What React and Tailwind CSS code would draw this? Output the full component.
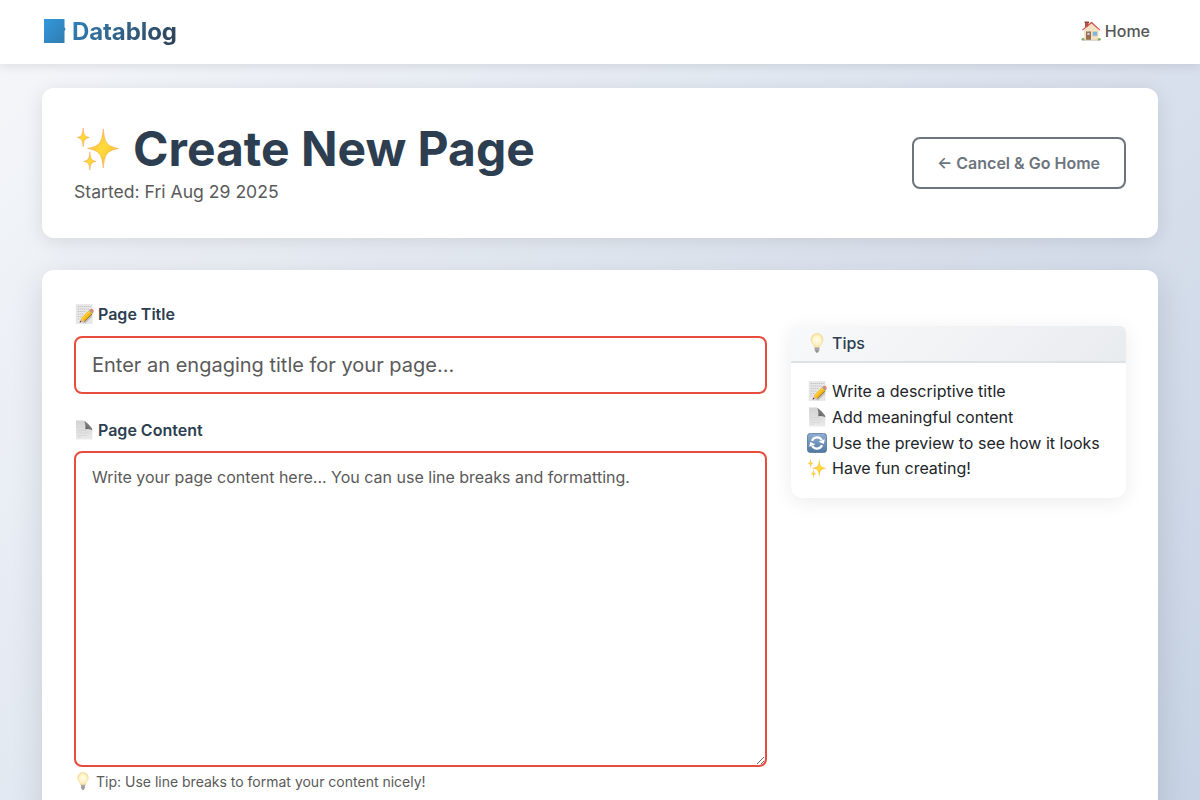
function Defs() {
  return (
    <svg className="absolute h-0 w-0" aria-hidden="true">
      <defs>
        <linearGradient id="gold" x1="0" y1="0" x2="1" y2="1">
          <stop offset="0" stopColor="#fbb040" />
          <stop offset=".5" stopColor="#ffdb3d" />
          <stop offset="1" stopColor="#f6a823" />
        </linearGradient>
        <linearGradient id="sheet" x1="0" y1="0" x2="0" y2="1">
          <stop offset="0" stopColor="#d2d2d2" />
          <stop offset="1" stopColor="#ebebeb" />
        </linearGradient>
        <linearGradient id="fold" x1="0" y1="1" x2="1" y2="0">
          <stop offset="0" stopColor="#4d4d4d" />
          <stop offset="1" stopColor="#a5a5a5" />
        </linearGradient>
        <linearGradient id="tile" x1="0" y1="0" x2="0" y2="1">
          <stop offset="0" stopColor="#8fb0d4" />
          <stop offset="1" stopColor="#52779f" />
        </linearGradient>
        <radialGradient id="glow">
          <stop offset="0" stopColor="#fffef2" />
          <stop offset=".6" stopColor="#fff6cc" />
          <stop offset="1" stopColor="#f6e09c" />
        </radialGradient>
      </defs>
    </svg>
  );
}

const box = "inline-block shrink-0";

function Sparkles({ className }) {
  return (
    <svg viewBox="0 0 48 48" className={`${box} ${className}`} fill="url(#gold)" stroke="#f5a04a" strokeWidth=".5">
      <path d="M29.500 4C31 18 32.500 22 45.500 24.500C32.500 27 31 31 29.500 45C28 31 26.500 27 13 24.500C26.500 22 28 18 29.500 4Z" />
      <path d="M8.500 3C9.200 10 10 12 15 13C10 14 9.200 16 8.500 23C7.800 16 7 14 2.500 13C7 12 7.800 10 8.500 3Z" />
      <path d="M15.500 28C16.200 35 17 37 22 38C17 39 16.200 40 15.500 47C14.800 40 14 39 9 38C14 37 14.800 35 15.500 28Z" />
    </svg>
  );
}

function Memo({ className }) {
  return (
    <svg viewBox="0 0 20 20" className={`${box} ${className}`}>
      <path d="M2 .5H18.200V19.500H2Z" fill="#e8e8e8" stroke="#d8d8d8" strokeWidth=".4" />
      <path d="M3.500 2.500H17M3.500 5H15M3.500 7.500H12M3.500 10H10M3.500 12.500H8M3.500 15H6" stroke="#b4b4b4" strokeWidth=".7" strokeDasharray="1.500 .6" />
      <path d="M8 19L18 9.500V13L11.500 19.300Z" fill="#999" opacity=".5" />
      <path d="M7 14.300L15 6.200L18.200 9.600L10.200 17.600Z" fill="#f8b916" />
      <path d="M8 15.300L16 7.200" stroke="#ffe06a" strokeWidth=".9" />
      <path d="M10.200 17.600L18.200 9.600" stroke="#8d5c12" strokeWidth=".9" />
      <path d="M7 14.300L10.200 17.600L5.600 18.500Z" fill="#dfb984" />
      <path d="M6.100 16.800L7.500 18.100L5.600 18.500Z" fill="#333" />
      <path d="M15 6.200L16 5.200L19.200 8.500L18.200 9.600Z" fill="#8e9aa0" />
      <path d="M16 5.200Q17.500 4.100 19.100 5.500Q20.200 7.200 19.200 8.500Z" fill="#ec766d" />
    </svg>
  );
}

function Page({ className }) {
  return (
    <svg viewBox="0 0 20 20" className={`${box} ${className}`}>
      <path d="M2 .5H9.500C12 3 13 8 18.300 10.500V19.500H2Z" fill="url(#sheet)" />
      <path d="M9 .5Q11.800 1 11.400 9.300Q15.500 8.200 18.500 10.500Q18 7.500 14.800 4.500Q11.500 1 9 .5Z" fill="url(#fold)" />
      <path d="M3.500 10.500H12M3.500 13H15M3.500 15.500H13M3.500 17.200H7" stroke="#cacaca" strokeWidth=".5" />
    </svg>
  );
}

function Bulb({ className }) {
  return (
    <svg viewBox="0 0 20 20" className={`${box} ${className}`}>
      <path d="M10 .5C6.400 .5 4 3.200 4 6.500C4 9.600 6.900 11.200 7.400 14.500H12.600C13.100 11.200 16 9.600 16 6.500C16 3.200 13.600 .5 10 .5Z" fill="url(#glow)" stroke="#eedaa0" strokeWidth=".6" />
      <path d="M8.800 14V8.500L8 7.500M11.200 14V8.500L12 7.500" fill="none" stroke="#f4e0a0" strokeWidth=".5" />
      <path d="M7.700 14.300H12.300V17.500Q12 19.500 10 19.500Q8 19.500 7.700 17.500Z" fill="#b4b4b4" />
      <path d="M7.700 15.700H12.300M7.800 17.300H12.200" stroke="#8a8a8a" strokeWidth=".6" />
      <path d="M8.800 18.500H11.200L10.600 19.600H9.400Z" fill="#666" />
    </svg>
  );
}

function Refresh({ className }) {
  return (
    <svg viewBox="0 0 20 20" className={`${box} ${className}`}>
      <rect x=".4" y=".4" width="19.200" height="19.200" rx="3" fill="url(#tile)" stroke="#4f7196" strokeWidth=".8" />
      <path d="M5 7.800C6.500 3.800 12.500 3 14.800 7.200M15 12.200C13.500 16.200 7.500 17 5.200 12.800" fill="none" stroke="#fff" strokeWidth="2.300" />
      <path d="M17.800 6.200L16.800 11L11.500 8.700ZM2.200 13.800L3.200 9L8.500 11.300Z" fill="#fff" />
    </svg>
  );
}

function House({ className }) {
  return (
    <svg viewBox="0 0 20 20" className={`${box} ${className}`}>
      <path d="M4 1H7.600V6H4Z" fill="#a8554d" />
      <path d="M3.600 .5H8V2H3.600Z" fill="#8c4440" />
      <path d="M3 9L10.500 2L17.500 9V19H3Z" fill="#f3e2c4" />
      <path d="M1 8.800L10 .9Q10.500 .5 11 .9L19.300 8.800L18.500 9.500L10.500 2.600L1.800 9.500Z" fill="#d2554c" />
      <path d="M5 10.500H10V19H5Z" fill="#9a6c52" />
      <path d="M6.300 11.800H8.500V14H6.300Z" fill="#c5d8e0" />
      <path d="M11.500 10.500H16.500V15H11.500Z" fill="#7bb7e4" stroke="#ead0a1" strokeWidth=".7" />
      <path d="M2.500 18.700H18V19.700H2.500Z" fill="#cfc5b8" />
      <circle cx="2" cy="18.300" r="1.400" fill="#83ad5f" />
      <circle cx="18.300" cy="18.300" r="1.400" fill="#83ad5f" />
    </svg>
  );
}

const tips = [
  [Memo, "Write a descriptive title", "h-[26px]"],
  [Page, "Add meaningful content", "h-[26px]"],
  [Refresh, "Use the preview to see how it looks", "h-[25px]"],
  [Sparkles, "Have fun creating!", "h-[26px]"],
];

export default function App() {
  return (
    <div className="h-[800px] overflow-hidden bg-linear-135 from-[#f5f7fa] to-[#c3cfe2] bg-[length:100%_1000px] font-['Inter',sans-serif] text-base text-[#212529]">
      <Defs />
      <nav className="relative flex h-16 items-center justify-between bg-white pr-[50px] pb-0.5 pl-[42px] shadow-[0_2px_10px_rgba(0,0,0,0.1)]">
        <a className="flex items-center text-2xl font-bold tracking-[-0.1px]">
          <svg viewBox="0 0 24 26" className="mr-[6px] h-[26px] w-6">
            <defs>
              <linearGradient id="book" x1="0" y1="0" x2="1" y2="1">
                <stop offset="0" stopColor="#3498db" />
                <stop offset="1" stopColor="#307cb0" />
              </linearGradient>
            </defs>
            <path d="M2 1H22.500V9.500L23.300 10V12L22.500 13V25H2Z" fill="url(#book)" />
          </svg>
          <span className="bg-linear-135 from-[#3085bf] to-[#2c3e50] bg-clip-text pt-0.5 text-transparent">Datablog</span>
        </a>
        <a className="flex items-center gap-1 font-medium text-[#555]">
          <House className="h-5 w-5" />
          Home
        </a>
      </nav>
      <main className="px-[42px] pt-6">
        <header className="flex h-[150px] items-center justify-between rounded-xl bg-white px-8 shadow-[0_4px_20px_rgba(0,0,0,0.1)]">
          <div className="pb-0.5">
            <h1 className="flex h-[58px] items-center text-5xl font-bold text-[#2c3e50]">
              <Sparkles className="mr-[11px] h-12 w-12 pb-0.5" />
              Create New Page
            </h1>
            <p className="text-[17.6px] leading-[27px] text-[#5a5a5a]">Started: Fri Aug 29 2025</p>
          </div>
          <button className="h-[52px] w-[214px] rounded-lg border-2 border-[#6c757d] pr-px font-semibold text-[#6c757d]">← Cancel &amp; Go Home</button>
        </header>
        <section className="mt-8 flex h-[700px] gap-6 rounded-xl bg-white px-8 pt-8 shadow-[0_8px_32px_rgba(0,0,0,0.12)]">
          <form className="w-[693px]">
            <label className="flex h-6 items-center gap-1 font-semibold text-[#2c3e50]">
              <Memo className="h-5 w-5" />
              Page Title
            </label>
            <input className="mt-[10px] block h-[58px] w-full rounded-lg border-2 border-[#e74c3c] px-4 text-xl placeholder:text-[#5a5a5a]" placeholder="Enter an engaging title for your page..." />
            <label className="mt-6 flex h-6 items-center gap-1 font-semibold text-[#2c3e50]">
              <Page className="h-5 w-5" />
              Page Content
            </label>
            <textarea className="mt-[9px] block h-[316px] w-full resize-y rounded-lg border-2 border-[#e74c3c] px-4 py-3 leading-6 placeholder:text-[#5a5a5a]" placeholder="Write your page content here... You can use line breaks and formatting." />
            <p className="mt-[3px] flex h-[22px] items-center gap-1 text-sm text-[#5a5a5a]">
              <Bulb className="h-[18px] w-[18px]" />
              <span className="pt-px">Tip: Use line breaks to format your content nicely!</span>
            </p>
          </form>
          <aside className="mt-6 h-[172px] w-[335px] overflow-hidden rounded-t-md rounded-b-xl bg-white shadow-[0_4px_20px_rgba(0,0,0,0.08)]">
            <h2 className="flex h-[37px] items-center gap-[5px] border-b-2 border-[#dee2e6] bg-linear-135 from-[#f8f9fa] to-[#e9ecef] px-4 pb-0.5 font-medium text-[#2c3e50]">
              <Bulb className="h-5 w-5" />
              Tips
            </h2>
            <ul className="px-4 pt-[15px]">
              {tips.map(([Icon, text, height]) => (
                <li key={text} className={`flex items-center gap-[5px] ${height}`}>
                  <Icon className="h-5 w-5" />
                  {text}
                </li>
              ))}
            </ul>
          </aside>
        </section>
      </main>
    </div>
  );
}
